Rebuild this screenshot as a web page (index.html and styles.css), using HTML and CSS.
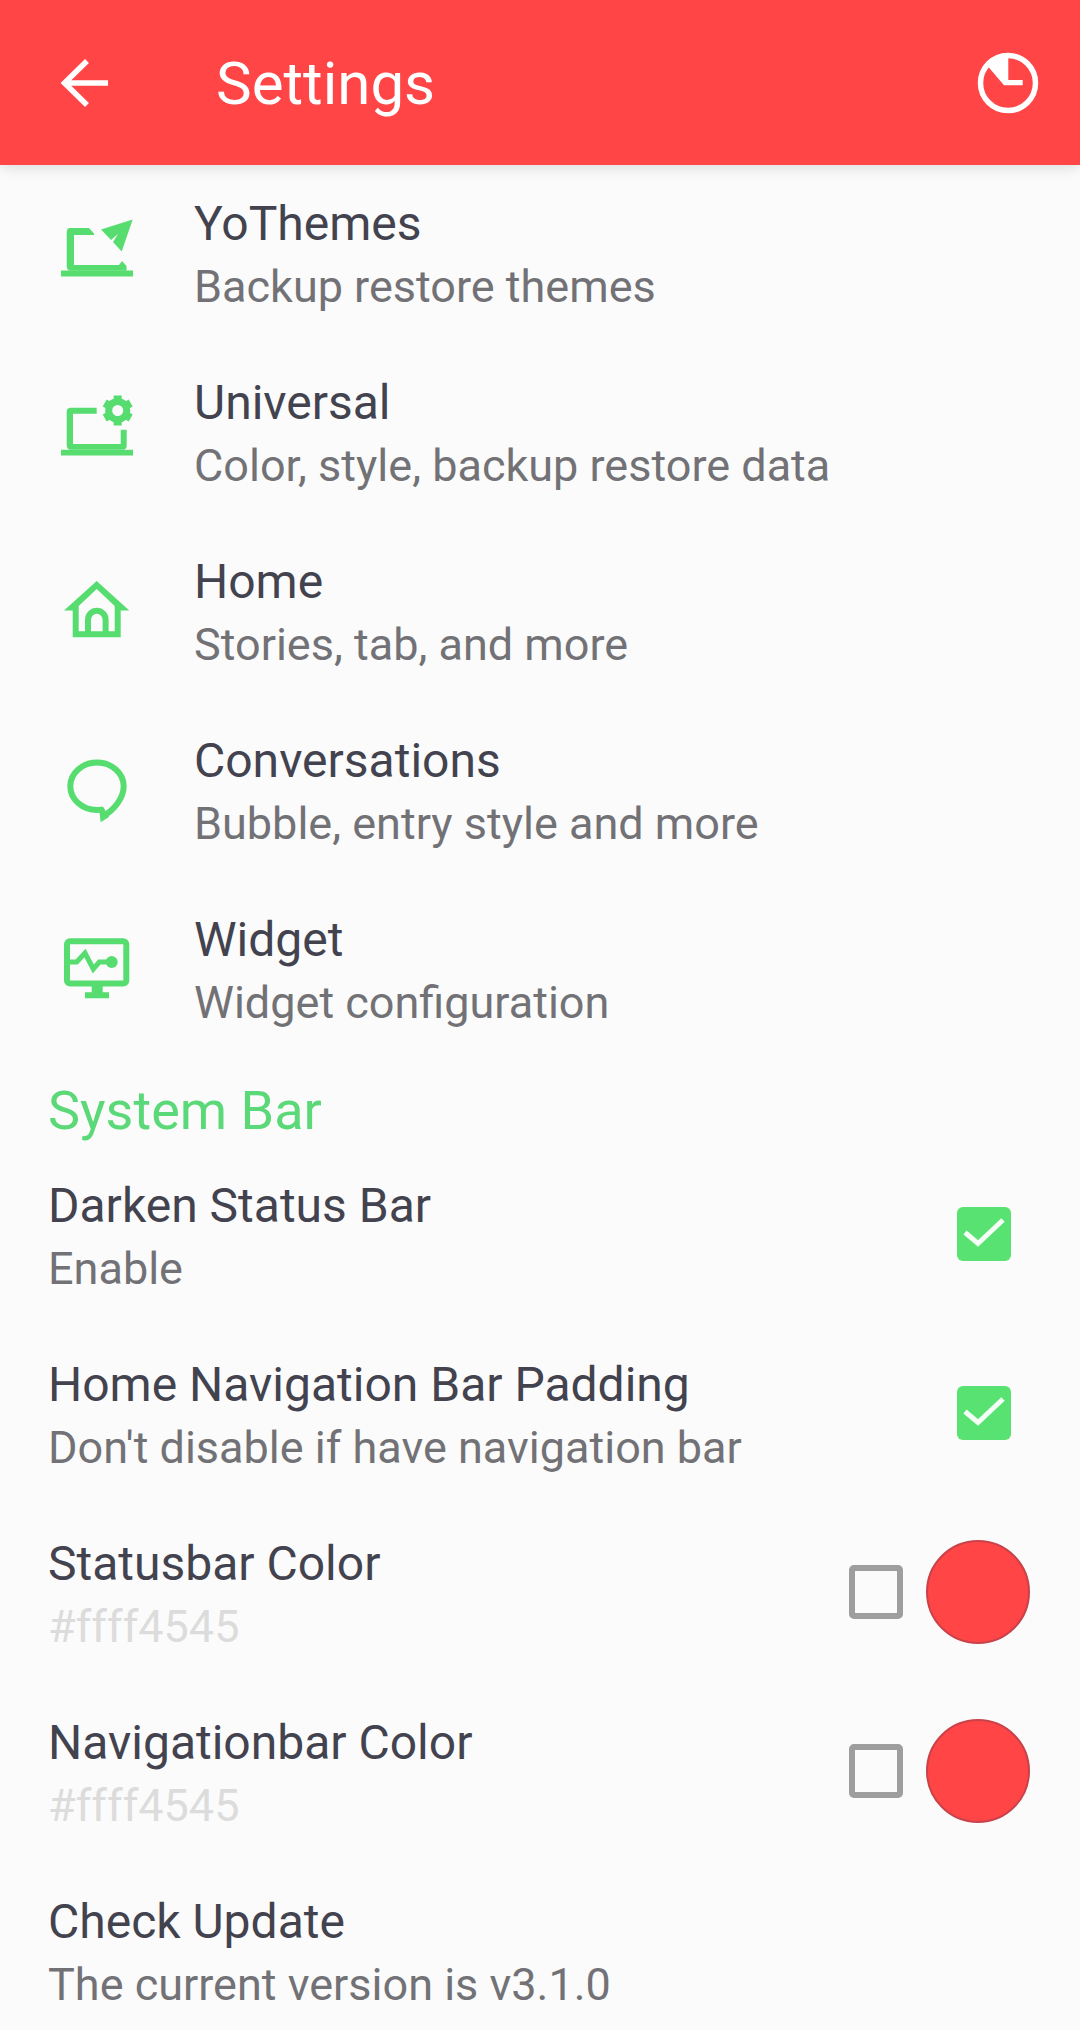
FILE: index.html
```html
<!DOCTYPE html>
<html lang="en">

<head>
    <meta charset="UTF-8">
    <meta name="viewport" content="width=device-width, initial-scale=1.0">
    <title>Settings</title>
    <link rel="stylesheet" href="styles.css">
</head>

<body>
    <header class="appbar">
        <a class="appbar-back" href="#" aria-label="Back">
            <svg width="60" height="60" viewBox="0 0 60 60" fill="none" stroke="#fff" stroke-width="5.5">
                <path d="M52 30H8M31 8L8.500 30L31 52" />
            </svg>
        </a>
        <h1 class="appbar-title">Settings</h1>
        <a class="appbar-clock" href="#" aria-label="Schedule">
            <svg width="64" height="64" viewBox="0 0 64 64">
                <circle cx="32" cy="32" r="27.500" fill="none" stroke="#fff" stroke-width="5.500" />
                <path fill="#fff" d="M32.300 5V29H46.700V34.300H28L12 15.500C18 9 25 5 32.300 5Z" />
            </svg>
        </a>
    </header>

    <main class="list">
        <div class="row row-icon">
            <svg class="row-glyph" width="80" height="80" viewBox="0 0 80 80">
                <path class="fill" d="M4 55.500H76V61.500H4Z" />
                <path class="fill" d="M13 13H32L37 18.500V20H17V50H62L65 46L69.500 51V55.800H14C11 55.800 9.700 54 9.700 51V17C9.700 14.500 11 13 13 13Z" />
                <path class="fill" d="M75.700 4.500L44 14.500L54 25L61 19L56 27L64.700 36.500Z" />
            </svg>
            <div class="row-text">
                <div class="row-title">YoThemes</div>
                <div class="row-sub">Backup restore themes</div>
            </div>
        </div>
        <div class="row row-icon">
            <svg class="row-glyph" width="80" height="80" viewBox="0 0 80 80">
                <path class="fill" d="M4 55.800H76V61.500H4Z" />
                <path class="fill" d="M14 13.800H39.700V19.800H16V50H63.700V35.800H69.700V52C69.700 54.500 68 55.800 66 55.800H14C11 55.800 9.700 54 9.700 51V18C9.700 15 11 13.800 14 13.800Z" />
                <circle class="line" cx="60.700" cy="16.500" r="9" stroke-width="7" />
                <path class="line" stroke-width="8" d="M60.700 1.500V6M60.700 27V31.500M47.700 9L51.200 11M70.200 22L73.700 24M47.700 24L51.200 22M70.200 11L73.700 9" />
            </svg>
            <div class="row-text">
                <div class="row-title">Universal</div>
                <div class="row-sub">Color, style, backup restore data</div>
            </div>
        </div>
        <div class="row row-icon">
            <svg class="row-glyph" width="80" height="80" viewBox="0 0 80 80">
                <path class="fill" fill-rule="evenodd" d="M39.700 8L72.300 37.500H63.700V64.200H15.700V37.500H7ZM39.700 16L21.700 33V58.200H57.700V33Z" />
                <path class="line" stroke-width="6" d="M31 60V46.500A8.800 8.800 0 0 1 48.600 46.500V60" />
            </svg>
            <div class="row-text">
                <div class="row-title">Home</div>
                <div class="row-sub">Stories, tab, and more</div>
            </div>
        </div>
        <div class="row row-icon">
            <svg class="row-glyph" width="80" height="80" viewBox="0 0 80 80">
                <path class="line" stroke-width="6" d="M46 57.400Q43 58 40 58A26.700 23.700 0 1 1 66.700 34.300C66.700 46 57 58 47 63.500" />
                <path class="fill" d="M46 54.500L42.300 59L43.700 70.200L52 65L48 58Z" />
            </svg>
            <div class="row-text">
                <div class="row-title">Conversations</div>
                <div class="row-sub">Bubble, entry style and more</div>
            </div>
        </div>
        <div class="row row-icon">
            <svg class="row-glyph" width="80" height="80" viewBox="0 0 80 80">
                <rect class="line" x="10" y="10.200" width="59.300" height="42.300" rx="3" stroke-width="6" />
                <path class="fill" d="M34.700 55H45.700V61.200H52V67.200H28V61.200H34.700Z" />
                <path class="line" stroke-width="5" d="M13 31H19.700L28 22L36.300 38L42.300 31H54" />
                <circle class="fill" cx="54.700" cy="31" r="6" />
            </svg>
            <div class="row-text">
                <div class="row-title">Widget</div>
                <div class="row-sub">Widget configuration</div>
            </div>
        </div>

        <div class="category">System Bar</div>

        <div class="row">
            <div class="row-text">
                <div class="row-title">Darken Status Bar</div>
                <div class="row-sub">Enable</div>
            </div>
            <span class="checkbox checked">
                <svg width="54" height="54" viewBox="0 0 54 54" fill="none" stroke="#f4fff6" stroke-width="5">
                    <path d="M8 25.500L21 36.500L46 13" />
                </svg>
            </span>
        </div>
        <div class="row">
            <div class="row-text">
                <div class="row-title">Home Navigation Bar Padding</div>
                <div class="row-sub">Don't disable if have navigation bar</div>
            </div>
            <span class="checkbox checked">
                <svg width="54" height="54" viewBox="0 0 54 54" fill="none" stroke="#f4fff6" stroke-width="5">
                    <path d="M8 25.500L21 36.500L46 13" />
                </svg>
            </span>
        </div>
        <div class="row">
            <div class="row-text">
                <div class="row-title">Statusbar Color</div>
                <div class="row-sub muted">#ffff4545</div>
            </div>
            <span class="checkbox"></span>
            <span class="swatch"></span>
        </div>
        <div class="row">
            <div class="row-text">
                <div class="row-title">Navigationbar Color</div>
                <div class="row-sub muted">#ffff4545</div>
            </div>
            <span class="checkbox"></span>
            <span class="swatch"></span>
        </div>
        <div class="row">
            <div class="row-text">
                <div class="row-title">Check Update</div>
                <div class="row-sub">The current version is v3.1.0</div>
            </div>
        </div>
    </main>
</body>

</html>
```

FILE: styles.css
```css
html, body {
    margin: 0;
    padding: 0;
}

body {
    width: 1080px;
    height: 2030px;
    overflow: hidden;
    background-color: #fbfbfb;
    font-family: Roboto, "Liberation Sans", sans-serif;
}

.appbar {
    position: relative;
    height: 165px;
    display: flex;
    align-items: center;
    background-color: #ff4545;
    box-shadow: 0 2px 14px rgba(0, 0, 0, 0.14);
}

.appbar-back {
    display: flex;
    margin-left: 56px;
}

.appbar-title {
    margin: 2px 0 0 100px;
    font-size: 60px;
    font-weight: 400;
    color: #fff;
}

.appbar-clock {
    display: flex;
    margin-left: auto;
    margin-right: 40px;
}

.row {
    height: 179px;
    display: flex;
    align-items: center;
    padding-left: 48px;
}

.row-icon {
    padding-left: 57px;
}

.row-glyph {
    flex: none;
    margin-right: 57px;
}

.row-text {
    flex: 1;
}

.row-icon .row-text {
    padding-top: 2px;
}

.row-title {
    font-size: 48px;
    line-height: 62px;
    color: #43434f;
}

.row-sub {
    margin-top: 1px;
    font-size: 45px;
    line-height: 62px;
    color: #727276;
}

.row-sub.muted {
    color: #dcdcdc;
}

.fill {
    fill: #57dd6f;
}

.line {
    fill: none;
    stroke: #57dd6f;
}

.category {
    height: 87.5px;
    box-sizing: border-box;
    padding: 22px 0 0 48px;
    font-size: 54px;
    line-height: 58px;
    color: #5bd877;
}

.checkbox {
    flex: none;
    box-sizing: border-box;
    width: 54px;
    height: 54px;
    margin: 0 69px 7px 0;
    border: 6px solid #9e9e9e;
    border-radius: 5px;
}

.checkbox.checked {
    border: none;
    border-radius: 6px;
    background-color: #58e272;
}

.checkbox + .swatch {
    margin-left: -46px;
}

.swatch {
    flex: none;
    box-sizing: border-box;
    width: 104px;
    height: 104px;
    margin: 0 50px 7px 0;
    border: 2px solid #c9424a;
    border-radius: 50%;
    background-color: #ff4545;
}
```
